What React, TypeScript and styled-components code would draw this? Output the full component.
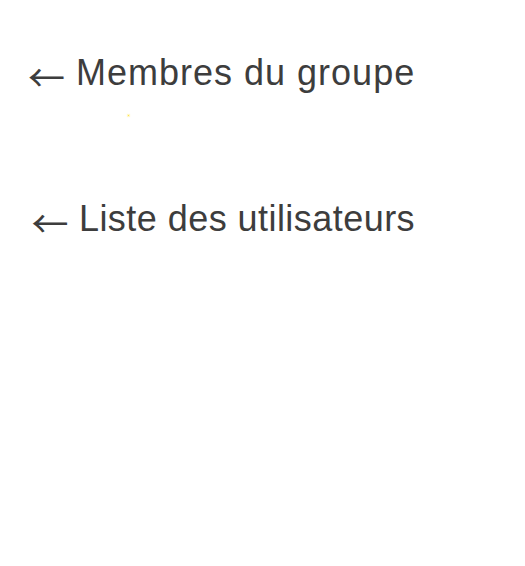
import React from "react";
import styled, { createGlobalStyle } from "styled-components";

const Global = createGlobalStyle`
  html, body { margin: 0; padding: 0; background: #ffffff; }
  body { font-family: "Liberation Sans", Arial, sans-serif; }
`;

const Page = styled.div`
  display: flex;
  flex-direction: column;
  padding-top: 52px;
`;

const Section = styled.section<{ $gap: number }>`
  display: flex;
  flex-direction: column;
  margin-bottom: ${(p) => p.$gap}px;
`;

const BackLink = styled.a<{ $indent: number; $tracking: number }>`
  display: block;
  font-family: "Liberation Sans", Arial, sans-serif;
  font-size: 36px;
  line-height: 42px;
  letter-spacing: ${(p) => p.$tracking}px;
  color: #3d3d3d;
  text-decoration: none;
  padding-left: ${(p) => p.$indent}px;
  white-space: nowrap;
`;

const Arrow = styled.span`
  font-family: "Noto Sans CJK JP", sans-serif;
  font-size: 37px;
  letter-spacing: 0;
  line-height: 0;
  vertical-align: -7px;
`;

const Marker = styled.span`
  display: block;
  width: 1px;
  height: 1px;
  margin: 21px 0 0 128px;
  background: #ffe34d;
  box-shadow: 0 0 1px 1px rgba(255, 230, 80, 0.35);
`;

export default function App() {
  return (
    <>
      <Global />
      <Page>
        <Section $gap={82}>
          <BackLink href="#" $indent={28} $tracking={1.0}>
            <Arrow>←</Arrow> Membres du groupe
          </BackLink>
          <Marker />
        </Section>
        <Section $gap={0}>
          <BackLink href="#" $indent={31.5} $tracking={0.45}>
            <Arrow>←</Arrow> Liste des utilisateurs
          </BackLink>
        </Section>
      </Page>
    </>
  );
}
